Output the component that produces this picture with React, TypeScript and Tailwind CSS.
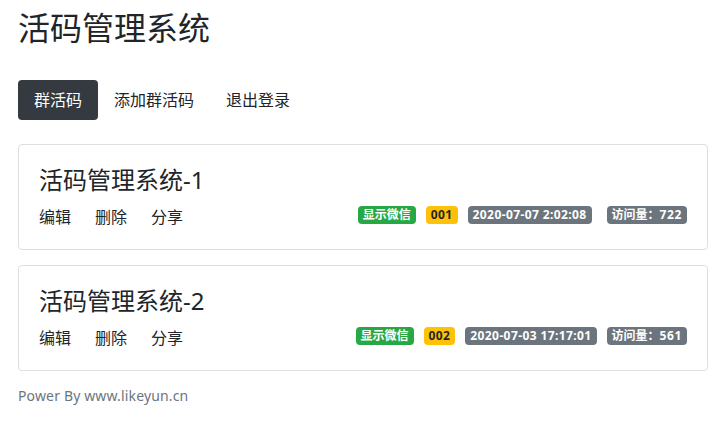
import React from 'react';

type Item = {
  title: string;
  code: string;
  date: string;
  visits: number;
  dateGap: string;
};

const items: Item[] = [
  { title: '活码管理系统-1', code: '001', date: '2020-07-07 2:02:08', visits: 722, dateGap: 'ml-[15px]' },
  { title: '活码管理系统-2', code: '002', date: '2020-07-03 17:17:01', visits: 561, dateGap: 'ml-[10px]' },
];

const badge = 'inline-block px-[5px] py-[3px] text-[12px] leading-[12px] font-bold rounded-[4px]';

const CodeCard: React.FC<{ item: Item }> = ({ item }) => (
  <div className="h-[106px] border border-[#dfdfdf] rounded-[4px] bg-white px-5 pt-5 mb-[15px]">
    <h3 className="text-[24px] leading-[29px] mb-[11px] text-[#212529]">{item.title}</h3>
    <div className="flex items-center justify-between h-6">
      <div className="flex text-[16px] leading-6 text-[#212529]">
        <a className="mr-6 cursor-pointer">编辑</a>
        <a className="mr-6 cursor-pointer">删除</a>
        <a className="cursor-pointer">分享</a>
      </div>
      <div className="flex items-center -mt-[5px]">
        <span className={`${badge} bg-[#28a745] text-white`}>显示微信</span>
        <span className={`${badge} bg-[#ffc107] text-[#212529] ml-[10px] tracking-[0.4px]`}>{item.code}</span>
        <span className={`${badge} bg-[#6c757d] text-white ml-[10px] tracking-[0.4px]`}>{item.date}</span>
        <span className={`${badge} bg-[#6c757d] text-white ${item.dateGap}`}>
          访问量：<span className="tracking-[0.6px]">{item.visits}</span>
        </span>
      </div>
    </div>
  </div>
);

const App: React.FC = () => {
  const tabs = ['群活码', '添加群活码', '退出登录'];
  return (
    <div className="min-h-screen bg-white text-[#212529] font-['Noto_Sans','Noto_Sans_CJK_SC',sans-serif]">
      <div className="pl-[18px] pr-[14px] pt-[9px]">
        <h1 className="text-[32px] leading-[38px] font-normal">活码管理系统</h1>
        <nav className="flex mt-[33px] mb-6">
          {tabs.map((t, i) => (
            <a
              key={t}
              className={`px-4 py-2 text-[16px] leading-6 rounded-[4px] cursor-pointer ${i === 0 ? 'bg-[#343a40] text-white' : 'text-[#212529]'}`}
            >
              {t}
            </a>
          ))}
        </nav>
        {items.map(it => (
          <CodeCard key={it.code} item={it} />
        ))}
        <p className="text-[14px] leading-[21px] text-[#6c757d] -mt-px tracking-[0.15px]">Power By www.likeyun.cn</p>
      </div>
    </div>
  );
};

export default App;
